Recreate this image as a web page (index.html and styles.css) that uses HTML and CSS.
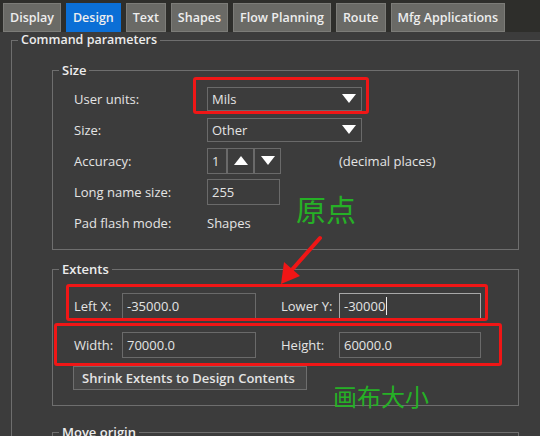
FILE: index.html
```html
<!DOCTYPE html>
<html lang="en">
<head>
    <meta charset="UTF-8">
    <title>Design Parameters</title>
    <link rel="stylesheet" href="styles.css">
</head>
<body>
    <div class="tabs">
        <span class="tab">Display</span>
        <span class="tab active">Design</span>
        <span class="tab">Text</span>
        <span class="tab">Shapes</span>
        <span class="tab">Flow Planning</span>
        <span class="tab">Route</span>
        <span class="tab">Mfg Applications</span>
    </div>

    <div class="panel">
        <fieldset class="group outer">
            <legend class="outer-title">Command parameters</legend>

            <fieldset class="group size">
                <legend>Size</legend>
                <div class="size-rows">
                    <div class="row">
                        <span class="lbl">User units:</span>
                        <div class="select">Mils<svg class="caret" viewBox="0 0 14 9"><polygon points="0,0 14,0 7,9"/></svg></div>
                    </div>
                    <div class="row">
                        <span class="lbl">Size:</span>
                        <div class="select">Other<svg class="caret" viewBox="0 0 14 9"><polygon points="0,0 14,0 7,9"/></svg></div>
                    </div>
                    <div class="row">
                        <span class="lbl">Accuracy:</span>
                        <div class="spin">
                            <div class="spin-num">1</div>
                            <div class="spin-btn"><svg class="caret" viewBox="0 0 14 9"><polygon points="0,9 14,9 7,0"/></svg></div>
                            <div class="spin-btn"><svg class="caret" viewBox="0 0 14 9"><polygon points="0,0 14,0 7,9"/></svg></div>
                        </div>
                        <span class="hint">(decimal places)</span>
                    </div>
                    <div class="row">
                        <span class="lbl">Long name size:</span>
                        <div class="field short">255</div>
                    </div>
                    <div class="row">
                        <span class="lbl">Pad flash mode:</span>
                        <span class="value">Shapes</span>
                    </div>
                </div>
            </fieldset>

            <fieldset class="group extents">
                <legend>Extents</legend>
                <div class="ext-rows">
                    <div class="erow">
                        <span class="elbl">Left X:</span>
                        <div class="field left">-35000.0</div>
                        <span class="elbl right">Lower Y:</span>
                        <div class="field wide focus"><span class="cursor">-30000</span></div>
                    </div>
                    <div class="erow">
                        <span class="elbl">Width:</span>
                        <div class="field left">70000.0</div>
                        <span class="elbl right">Height:</span>
                        <div class="field wide">60000.0</div>
                    </div>
                    <div class="btn">Shrink Extents to Design Contents</div>
                </div>
            </fieldset>

            <fieldset class="group move">
                <legend>Move origin</legend>
            </fieldset>
        </fieldset>
    </div>

    <!-- annotations drawn on top of the screenshot -->
    <div class="mark mark-units"></div>
    <div class="mark mark-origin"></div>
    <div class="mark mark-size"></div>
    <svg class="arrow" viewBox="0 0 60 56">
        <line x1="50" y1="4" x2="20" y2="38" />
        <polygon points="11,50 14,28 30,42" />
    </svg>
    <span class="note note-origin">原点</span>
    <span class="note note-size">画布大小</span>
</body>
</html>
```

FILE: styles.css
```css
* {
    box-sizing: border-box;
}

body {
    margin: 0;
    width: 540px;
    height: 436px;
    overflow: hidden;
    position: relative;
    background: #3c3c3c;
    color: #e4e4e4;
    font-family: "Open Sans", "Noto Sans", sans-serif;
    font-size: 13px;
}

.tabs {
    display: flex;
    gap: 5px;
    height: 32px;
    padding: 3px 0 0 3px;
    background: #2e2e2b;
}

.tab {
    height: 29px;
    line-height: 27px;
    padding: 0 6px;
    background: #6a6a66;
    border: 1px solid #7c7c78;
    color: #eeeeee;
    font-size: 12.5px;
    font-weight: 600;
}

.tab.active {
    background: #0b6fd6;
    border-color: #0b6fd6;
}

.panel {
    padding-left: 11px;
}

fieldset {
    margin: 0;
    padding: 0;
    min-width: 0;
    border: 1px solid #6e6e6e;
}

legend {
    margin-left: 6px;
    padding: 0 3px;
    line-height: 16px;
    font-weight: 600;
    color: #ececec;
}

.outer {
    width: 529px;
    height: 404px;
    border-right: none;
    border-bottom: none;
}

.outer-title {
    font-size: 12.5px;
}

.size,
.extents,
.move {
    margin-left: 40px;
    width: 467px;
}

.size {
    margin-top: 14px;
}

.size-rows {
    padding: 5px 0 11px 21px;
}

.row {
    display: flex;
    align-items: center;
    height: 31px;
}

.lbl {
    width: 133px;
}

.select {
    width: 155px;
    height: 24px;
    border: 1px solid #6a6a6a;
    display: flex;
    align-items: center;
    justify-content: space-between;
    padding: 0 5px 0 4px;
}

.caret {
    width: 14px;
    height: 9px;
    fill: #ffffff;
}

.spin {
    display: flex;
    height: 26px;
}

.spin-num {
    width: 20px;
    border: 1px solid #6a6a6a;
    padding-left: 4px;
    line-height: 24px;
}

.spin-btn {
    width: 27px;
    border: 1px solid #6a6a6a;
    display: flex;
    align-items: center;
    justify-content: center;
}

.hint {
    margin-left: 58px;
}

.field {
    height: 26px;
    line-height: 24px;
    border: 1px solid #6a6a6a;
    padding-left: 4px;
}

.field.short {
    width: 73px;
}

.extents {
    margin-top: 11px;
}

.ext-rows {
    padding: 16px 0 15px 21px;
}

.erow {
    display: flex;
    align-items: center;
    height: 26px;
    margin-bottom: 13px;
}

.erow + .erow {
    margin-bottom: 8px;
}

.elbl {
    width: 48px;
}

.elbl.right {
    width: 58px;
    margin-left: 25px;
}

.field.left {
    width: 134px;
}

.field.wide {
    width: 142px;
}

.field.focus {
    border-color: #a8a8a8;
}

.cursor {
    border-right: 1px solid #eeeeee;
    padding-right: 1px;
}

.btn {
    width: 234px;
    height: 24px;
    margin-left: -1px;
    line-height: 22px;
    padding-left: 8px;
    background: #474747;
    border: 1px solid #6e6e6e;
    font-weight: 600;
    white-space: nowrap;
}

.move {
    margin-top: 18px;
    height: 12px;
    border-bottom: none;
}

/* red annotation frames */
.mark {
    position: absolute;
    border: 3px solid #f01616;
    border-radius: 3px;
}

.mark-units {
    left: 193px;
    top: 77px;
    width: 176px;
    height: 37px;
}

.mark-origin {
    left: 66px;
    top: 284px;
    width: 422px;
    height: 37px;
}

.mark-size {
    left: 54px;
    top: 323px;
    width: 448px;
    height: 43px;
}

.arrow {
    position: absolute;
    left: 270px;
    top: 234px;
    width: 60px;
    height: 56px;
}

.arrow line {
    stroke: #f01616;
    stroke-width: 4;
    stroke-linecap: round;
}

.arrow polygon {
    fill: #f01616;
}

.note {
    position: absolute;
    color: #26b026;
    font-family: "Noto Sans CJK SC", sans-serif;
    white-space: nowrap;
}

.note-origin {
    left: 296px;
    top: 192px;
    font-size: 30px;
    line-height: 32px;
}

.note-size {
    left: 333px;
    top: 381px;
    font-size: 24px;
    line-height: 30px;
}
```
